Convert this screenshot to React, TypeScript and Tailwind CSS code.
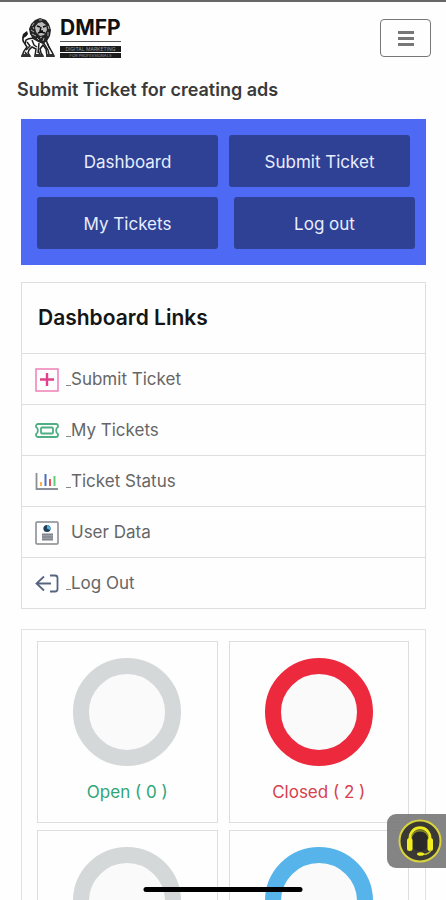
import type { ReactNode } from 'react';
import { clsx } from 'clsx';

// --- Types ---
interface DashboardLink {
  label: string;
  icon: ReactNode;
  dash: boolean;
}

interface TicketStat {
  id: string;
  label?: string;
  ring: string;
  text: string;
}

// --- Icons ---
function LionLogo() {
  return (
    <svg width="34" height="40" viewBox="0 0 34 40" fill="none" aria-hidden="true">
      {/* tail */}
      <path d="M5 26C1 24 1 19 4 18C6 17 6 16 5 14" stroke="#222" strokeWidth="1.6" />
      <path d="M6 13L2 16L1 20L4 19L7 16Z" fill="#1c1c1c" />
      {/* body and legs */}
      <path d="M5 22C9 19 13 20 17 21L25 22L28 29L31 34L33 38H26L25 31L22 27L19 31L20 35L22 38H14L15 31L11 29L8 32L7 35L9 38H1L3 33L6 29L4 26Z" fill="#fff" stroke="#1c1c1c" strokeWidth="1.5" />
      <path d="M6 24L9 28L5 32M11 22L13 27L16 29M18 25L17 35M22 24L27 32L28 36M26 25L29 31M4 34L6 37M17 32L19 37" stroke="#222" strokeWidth="1.5" />
      <path d="M1 36H9V39H0ZM14 36H22V39H13ZM25 36H33V39H25Z" fill="#333" />
      {/* mane */}
      <path d="M14 2L19 0L25 2L28 6L30 12L29 18L26 23L22 26L17 24L12 21L9 16L8 11L10 6Z" fill="#242424" />
      <path d="M17 5L21 4L25 7L26 12L23 17L19 18L15 14L14 9Z" fill="#bbb" />
      <path d="M16 8L19 9M22 9L25 8M20 9L19 13L22 13M17 15L20 14L24 15" stroke="#111" strokeWidth="1.4" />
      <path d="M11 8L13 5M10 12L13 14M11 16L15 18M16 20L18 22M27 8L28 11M27 14L27 18M23 20L22 23M18 2L21 2M13 11L12 9M19 20L21 19" stroke="#aaa" strokeWidth="1" />
    </svg>
  );
}

function SubmitIcon() {
  return (
    <svg width="24" height="24" viewBox="0 0 24 24" fill="none" aria-hidden="true">
      <rect x="1" y="1" width="22" height="22" stroke="#ef7fb5" strokeWidth="1.5" />
      <path d="M12 5V18M5 11.5H19" stroke="#e0408c" strokeWidth="2.4" />
    </svg>
  );
}

function TicketIcon() {
  return (
    <svg width="24" height="24" viewBox="0 0 24 24" fill="none" stroke="#4fae84" aria-hidden="true">
      <path d="M3 5H21C22 5 23 6 23 7V8C20.5 9 20.5 14 23 15V16C23 17 22 18 21 18H3C2 18 1 17 1 16V15C3.5 14 3.5 9 1 8V7C1 6 2 5 3 5Z" strokeWidth="1.8" />
      <rect x="6" y="8.5" width="12" height="6" rx="1" strokeWidth="1.8" />
    </svg>
  );
}

function StatusIcon() {
  return (
    <svg width="24" height="24" viewBox="0 0 24 24" fill="none" aria-hidden="true">
      <path d="M1.5 3V19H23" stroke="#8b9098" strokeWidth="1.8" />
      <path d="M6 12V16" stroke="#f3b64b" strokeWidth="2" />
      <path d="M10.500 4V16" stroke="#4a6fc0" strokeWidth="2" />
      <path d="M15 9V16" stroke="#e0565b" strokeWidth="2" />
      <path d="M19.500 6V16" stroke="#62cf78" strokeWidth="2" />
    </svg>
  );
}

function UserIcon() {
  return (
    <svg width="24" height="24" viewBox="0 0 24 24" fill="none" aria-hidden="true">
      <rect x="1" y="1" width="22" height="22" rx="1" stroke="#85888d" strokeWidth="1.5" />
      <circle cx="12" cy="7.5" r="3.6" fill="#1d3f5c" />
      <path d="M12 7.5V4A3.5 3.5 0 0 1 15 9Z" fill="#4eb5e6" />
      <rect x="7" y="12.5" width="11" height="7" fill="#a3a6ab" />
      <path d="M7 13.5H18M7 16H18M7 18.5H18" stroke="#82868e" strokeWidth="1.4" />
    </svg>
  );
}

function LogoutIcon() {
  return (
    <svg width="24" height="24" viewBox="0 0 24 24" fill="none" stroke="#566480" strokeWidth="1.8" aria-hidden="true">
      <path d="M16 11.5H2M9 4.500L1.500 11.500L9 18.500" />
      <path d="M15 3.500H20C21.500 3.500 22.500 4 22.500 6V17C22.500 19 21.500 19.500 20 19.500H15" />
    </svg>
  );
}

function HeadsetIcon() {
  return (
    <svg width="44" height="44" viewBox="0 0 44 44" fill="none" aria-hidden="true">
      <circle cx="22" cy="22" r="20.5" fill="#3b3934" stroke="#d8d33c" strokeWidth="2" />
      <path d="M15 18C15 11 29 11 29 18V29C26 33 18 33 15 29Z" fill="#2c2a28" />
      <path d="M12 20C12 5 32 5 32 20" stroke="#eeea22" strokeWidth="3" />
      <path d="M14 17C16 10 28 10 30 17" stroke="#8a8725" strokeWidth="1.5" />
      <rect x="9" y="19" width="5.5" height="13" rx="2.5" fill="#f1ee1c" />
      <rect x="29.5" y="19" width="5.5" height="13" rx="2.5" fill="#f1ee1c" />
      <path d="M33 31C32 34 29 35.5 24 35.5" stroke="#c9c52c" strokeWidth="1.3" />
      <ellipse cx="22.5" cy="35" rx="3.5" ry="1.8" fill="#f1ee1c" />
    </svg>
  );
}

const links: DashboardLink[] = [
  { label: 'Submit Ticket', icon: <SubmitIcon />, dash: true },
  { label: 'My Tickets', icon: <TicketIcon />, dash: true },
  { label: 'Ticket Status', icon: <StatusIcon />, dash: true },
  { label: 'User Data', icon: <UserIcon />, dash: false },
  { label: 'Log Out', icon: <LogoutIcon />, dash: true },
];

const stats: TicketStat[] = [
  { id: 'open', label: 'Open ( 0 )', ring: 'border-[#d4d8d9]', text: 'text-[#2fa577]' },
  { id: 'closed', label: 'Closed ( 2 )', ring: 'border-[#ec293d]', text: 'text-[#d6404f]' },
  { id: 'third', ring: 'border-[#d4d8d9]', text: '' },
  { id: 'fourth', ring: 'border-[#56b4ea]', text: '' },
];

const navButton = 'h-[52px] flex-1 rounded-[3px] bg-[#2e4194] pt-[3px] text-[17px] text-[#e8edff]';

export default function App() {
  return (
    <div className="h-screen overflow-hidden border-t-2 border-[#666] bg-[#fefefe] font-['Inter',sans-serif]">
      {/* Header */}
      <header className="flex h-[72px] items-center justify-between pr-[15px] pl-[21px]">
        <a href="#" className="flex items-center gap-[5px]">
          <LionLogo />
          <span className="flex w-[61px] flex-col">
            <span className="text-[21px] leading-[18px] font-bold text-[#111]">DMFP</span>
            <span className="mt-1 h-px bg-[#555]" />
            <span className="mt-1 h-[6px] bg-[#1c1c1c] text-center text-[5px] leading-[6px] whitespace-nowrap text-[#999]">DIGITAL MARKETING</span>
            <span className="mt-px h-[5px] bg-[#1c1c1c] text-center text-[4px] leading-[5px] whitespace-nowrap text-[#999]">FOR PROFESSIONALS</span>
          </span>
        </a>
        <button aria-label="Menu" className="flex h-[38px] w-[51px] flex-col items-center justify-center gap-[3px] rounded-[4px] border border-[#777]">
          <span className="h-[3px] w-4 bg-[#777]" />
          <span className="h-[3px] w-4 bg-[#777]" />
          <span className="h-[3px] w-4 bg-[#777]" />
        </button>
      </header>

      <h1 className="px-[17px] pt-1 text-[18px] leading-6 font-semibold text-[#3a3a3a]">Submit Ticket for creating ads</h1>

      <main className="pt-[17px] pr-5 pl-[21px]">
        {/* Quick actions */}
        <nav className="flex flex-col gap-[10px] bg-[#4e6af5] py-4 pl-4">
          <div className="flex gap-[11px] pr-4">
            <button className={navButton}>Dashboard</button>
            <button className={navButton}>Submit Ticket</button>
          </div>
          <div className="flex gap-4 pr-[11px]">
            <button className={navButton}>My Tickets</button>
            <button className={navButton}>Log out</button>
          </div>
        </nav>

        {/* Links */}
        <section className="mt-[17px] border border-[#dedede]">
          <h2 className="px-4 py-[21px] text-[21px] leading-7 font-semibold text-[#151515]">Dashboard Links</h2>
          <ul>
            {links.map(link => (
              <li key={link.label} className="border-t border-[#dedede]">
                <a href="#" className="flex h-[50px] items-center pt-px pl-[13px] text-[17px] text-[#666]">
                  {link.icon}
                  <span className={clsx('mt-3 ml-[7px] h-px w-[5px]', link.dash && 'bg-[#888]')} />
                  {link.label}
                </a>
              </li>
            ))}
          </ul>
        </section>

        {/* Ticket counts */}
        <section className="mt-5 grid grid-cols-2 gap-x-[11px] gap-y-[7px] border border-[#e2e2e2] py-[11px] pr-4 pl-[15px]">
          {stats.map(stat => (
            <div key={stat.id} className="flex h-[182px] flex-col items-center border border-[#dedede] pt-4">
              <div className={clsx('size-[108px] rounded-full border-[16px] bg-[#fafafa]', stat.ring)} />
              {stat.label && <p className={clsx('mt-[14px] text-[17px] leading-6', stat.text)}>{stat.label}</p>}
            </div>
          ))}
        </section>
      </main>

      {/* Support chat */}
      <button aria-label="Support" className="fixed right-0 bottom-8 flex h-[54px] w-[59px] items-center rounded-l-[9px] bg-[#777]/90 pl-[11px]">
        <HeadsetIcon />
      </button>
      <div className="fixed bottom-2 left-1/2 h-[5px] w-[159px] -translate-x-1/2 rounded-full bg-black" />
    </div>
  );
}
